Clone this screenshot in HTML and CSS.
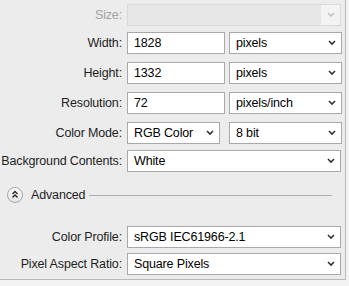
FILE: index.html
```html
<!DOCTYPE html>
<html lang="en">
<head>
    <meta charset="UTF-8">
    <title>New Document</title>
    <link rel="stylesheet" href="styles.css">
</head>
<body>

    <div class="panel">
        <div class="row">
            <span class="label label-disabled">Size:</span>
            <div class="select select-disabled field-full">
                <span class="select-value"></span>
                <span class="select-arrow">
                    <svg width="8" height="6" viewBox="0 0 8 6"><polyline points="1,1 4,4 7,1" fill="none" stroke="#c4c4c4" stroke-width="1.6"/></svg>
                </span>
            </div>
        </div>

        <div class="row row-tight">
            <span class="label">Width:</span>
            <div class="input field-num">1828</div>
            <div class="select field-unit">
                <span class="select-value">pixels</span>
                <svg width="8" height="6" viewBox="0 0 8 6"><polyline points="1,1 4,4 7,1" fill="none" stroke="#333" stroke-width="1.6"/></svg>
            </div>
        </div>

        <div class="row">
            <span class="label">Height:</span>
            <div class="input field-num">1332</div>
            <div class="select field-unit">
                <span class="select-value">pixels</span>
                <svg width="8" height="6" viewBox="0 0 8 6"><polyline points="1,1 4,4 7,1" fill="none" stroke="#333" stroke-width="1.6"/></svg>
            </div>
        </div>

        <div class="row">
            <span class="label">Resolution:</span>
            <div class="input field-num">72</div>
            <div class="select field-unit">
                <span class="select-value">pixels/inch</span>
                <svg width="8" height="6" viewBox="0 0 8 6"><polyline points="1,1 4,4 7,1" fill="none" stroke="#333" stroke-width="1.6"/></svg>
            </div>
        </div>

        <div class="row">
            <span class="label">Color Mode:</span>
            <div class="select field-mode">
                <span class="select-value">RGB Color</span>
                <svg width="8" height="6" viewBox="0 0 8 6"><polyline points="1,1 4,4 7,1" fill="none" stroke="#333" stroke-width="1.6"/></svg>
            </div>
            <div class="select field-unit">
                <span class="select-value">8 bit</span>
                <svg width="8" height="6" viewBox="0 0 8 6"><polyline points="1,1 4,4 7,1" fill="none" stroke="#333" stroke-width="1.6"/></svg>
            </div>
        </div>

        <div class="row row-tight">
            <span class="label">Background Contents:</span>
            <div class="select field-full">
                <span class="select-value">White</span>
                <svg width="8" height="6" viewBox="0 0 8 6"><polyline points="1,1 4,4 7,1" fill="none" stroke="#333" stroke-width="1.6"/></svg>
            </div>
        </div>

        <!-- Advanced -->
        <div class="advanced">
            <span class="toggle">
                <svg width="16" height="16" viewBox="0 0 16 16">
                    <defs>
                        <linearGradient id="ring" x1="0" y1="0" x2="0" y2="1">
                            <stop offset="0" stop-color="#ffffff"/>
                            <stop offset="1" stop-color="#e4e4e4"/>
                        </linearGradient>
                    </defs>
                    <circle cx="8" cy="8" r="7.5" fill="url(#ring)" stroke="#a6a6a6"/>
                    <polyline points="5.5,7 8,4.5 10.5,7" fill="none" stroke="#222" stroke-width="1.3"/>
                    <polyline points="5.5,10.5 8,8 10.5,10.5" fill="none" stroke="#222" stroke-width="1.3"/>
                </svg>
            </span>
            <span class="advanced-title">Advanced</span>
            <span class="advanced-line"></span>
        </div>

        <div class="row row-profile">
            <span class="label">Color Profile:</span>
            <div class="select field-full">
                <span class="select-value">sRGB IEC61966-2.1</span>
                <svg width="8" height="6" viewBox="0 0 8 6"><polyline points="1,1 4,4 7,1" fill="none" stroke="#333" stroke-width="1.6"/></svg>
            </div>
        </div>

        <div class="row row-aspect">
            <span class="label">Pixel Aspect Ratio:</span>
            <div class="select field-full">
                <span class="select-value">Square Pixels</span>
                <svg width="8" height="6" viewBox="0 0 8 6"><polyline points="1,1 4,4 7,1" fill="none" stroke="#333" stroke-width="1.6"/></svg>
            </div>
        </div>
    </div>

</body>
</html>
```

FILE: styles.css
```css
body {
    margin: 0;
    background-color: #f3f3f3;
    font-family: "Liberation Sans", Arial, sans-serif;
    font-size: 12.5px;
    letter-spacing: -0.15px;
    color: #1e1e1e;
}

.panel {
    width: 346px;
    height: 280px;
    box-sizing: border-box;
    background-color: #ececec;
    border-right: 1px solid #b9b9b9;
    border-bottom: 1px solid #b9b9b9;
    padding-top: 4px;
    display: flex;
    flex-direction: column;
}

.row {
    display: flex;
    align-items: center;
    height: 22px;
    margin-top: 8px;
}

.row:first-child {
    margin-top: 0;
}

.row-tight {
    margin-top: 6px;
}

.row-profile {
    margin-top: 23px;
}

.row-aspect {
    margin-top: 5px;
}

.label {
    width: 122px;
    margin-right: 5px;
    text-align: right;
    white-space: nowrap;
}

.label-disabled {
    color: #a3a3a3;
}

.input,
.select {
    height: 22px;
    box-sizing: border-box;
    border: 1px solid #a9a9a9;
    background-color: #fff;
    color: #000;
    display: flex;
    align-items: center;
    padding-left: 6px;
}

.select {
    justify-content: space-between;
    padding-right: 5px;
}

.select-disabled {
    background-color: #e6e6e6;
    border-color: #d9d9d9;
    padding-right: 0;
}

.select-arrow {
    width: 19px;
    height: 20px;
    background-color: #f3f3f3;
    display: flex;
    align-items: center;
    justify-content: center;
}

.field-full {
    width: 214px;
}

.field-num {
    width: 98px;
    margin-right: 4px;
}

.field-unit {
    width: 113px;
}

.field-mode {
    width: 93px;
    margin-right: 9px;
}

.advanced {
    display: flex;
    align-items: center;
    height: 16px;
    margin-top: 15px;
    padding-left: 7px;
}

.toggle {
    width: 16px;
    height: 16px;
    display: flex;
}

.advanced-title {
    margin-left: 8px;
    color: #1e1e1e;
}

.advanced-line {
    flex: 1;
    margin-left: 4px;
    margin-right: 13px;
    border-top: 1px solid #b0b0b0;
}
```
